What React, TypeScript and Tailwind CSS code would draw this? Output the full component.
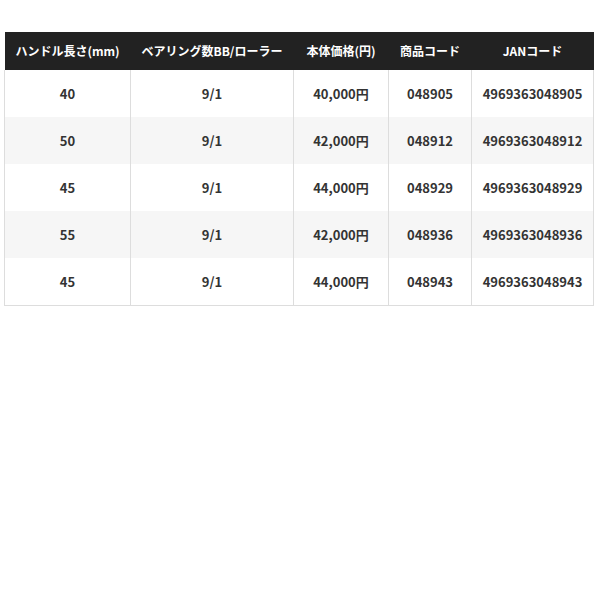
const HEAD = ["ハンドル長さ(mm)", "ベアリング数BB/ローラー", "本体価格(円)", "商品コード", "JANコード"];

const ROWS = [
  ["40", "9/1", "40,000円", "048905", "4969363048905"],
  ["50", "9/1", "42,000円", "048912", "4969363048912"],
  ["45", "9/1", "44,000円", "048929", "4969363048929"],
  ["55", "9/1", "42,000円", "048936", "4969363048936"],
  ["45", "9/1", "44,000円", "048943", "4969363048943"],
];

const WIDTHS = ["w-[126px]", "w-[163px]", "w-[95px]", "w-[83px]", "w-[122px]"];

export default function App() {
  return (
    <div className="bg-white min-h-[600px] pt-[32px] px-[4px] font-['Noto_Sans_CJK_JP','Noto_Sans',sans-serif]">
      <table className="w-[589px] table-fixed border-collapse text-[13px] font-bold text-[#333] border-b border-[#ddd]">
        <colgroup>
          {WIDTHS.map((w, i) => (
            <col key={i} className={w} />
          ))}
        </colgroup>
        <thead>
          <tr className="h-[38px] bg-[#222] text-white">
            {HEAD.map((h) => (
              <th key={h} className="text-center text-[12px] font-bold whitespace-nowrap px-0">
                {h}
              </th>
            ))}
          </tr>
        </thead>
        <tbody>
          {ROWS.map((row, i) => (
            <tr key={i} className={i % 2 === 1 ? "h-[47px] bg-[#f6f6f6]" : "h-[47px] bg-white"}>
              {row.map((c, j) => (
                <td key={j} className="text-center border-x border-[#ddd]">
                  {c}
                </td>
              ))}
            </tr>
          ))}
        </tbody>
      </table>
    </div>
  );
}
